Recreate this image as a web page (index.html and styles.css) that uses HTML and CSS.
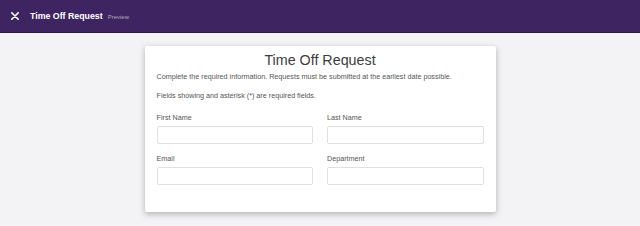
FILE: index.html
```html
<!DOCTYPE html>
<html lang="en">
<head>
    <meta charset="UTF-8">
    <meta name="viewport" content="width=device-width, initial-scale=1.0">
    <title>Time Off Request</title>
    <link rel="stylesheet" href="styles.css">
</head>
<body>
    <div class="topbar">
        <svg class="close" width="8" height="8" viewBox="0 0 10 10">
            <path d="M1 1L9 9M9 1L1 9" stroke="#fff" stroke-width="2" stroke-linecap="round"/>
        </svg>
        <span class="bartitle">Time Off Request</span>
        <span class="preview">Preview</span>
    </div>

    <div class="page">
        <div class="card">
            <h1>Time Off Request</h1>
            <p class="intro">Complete the required information. Requests must be submitted at the earliest date possible.</p>
            <p class="note">Fields showing and asterisk (*) are required fields.</p>

            <div class="grid">
                <div class="field">
                    <label>First Name</label>
                    <input type="text">
                </div>
                <div class="field">
                    <label>Last Name</label>
                    <input type="text">
                </div>
                <div class="field">
                    <label>Email</label>
                    <input type="text">
                </div>
                <div class="field">
                    <label>Department</label>
                    <input type="text">
                </div>
            </div>
        </div>
    </div>
</body>
</html>
```

FILE: styles.css
```css
body{
    margin: 0;
    background: #f3f3f5;
    font-family: "Liberation Sans", Arial, sans-serif;
    height: 226px;
    overflow: hidden;
}
.topbar{
    height: 32px;
    background: #3e2460;
    display: flex;
    align-items: center;
    padding-left: 11px;
    box-shadow: 0 1px 0 #2c1747;
}
.close{
    margin-right: 11px;
}
.bartitle{
    color: #fff;
    font-weight: bold;
    font-size: 8.8px;
}
.preview{
    color: #b3a6c4;
    font-size: 6px;
    margin-left: 5px;
    margin-top: 2px;
}
.page{
    padding-top: 14px;
}
.card{
    width: 327px;
    margin: 0 auto;
    background: #fff;
    padding: 4px 12px 27px;
    box-shadow: 0 2px 6px rgba(0, 0, 0, 0.28);
    border-radius: 2px;
}
h1{
    margin: 0;
    font-weight: normal;
    font-size: 14.3px;
    line-height: 20px;
    text-align: center;
    color: #3d3d3d;
}
.intro, .note{
    margin: 0;
    font-size: 7.2px;
    line-height: 10px;
    color: #555;
}
.intro{
    margin-top: 2px;
}
.note{
    margin-top: 9px;
}
.grid{
    display: grid;
    grid-template-columns: 1fr 1fr;
    column-gap: 14px;
    row-gap: 10px;
    margin-top: 12px;
}
.field{
    display: flex;
    flex-direction: column;
    min-width: 0;
}
label{
    font-size: 7.2px;
    line-height: 10px;
    color: #555;
}
input{
    box-sizing: border-box;
    width: 100%;
    min-width: 0;
    height: 18px;
    margin: 3px 0 0;
    border: 1px solid #e0e0e4;
    border-radius: 2px;
    outline: none;
}
```
